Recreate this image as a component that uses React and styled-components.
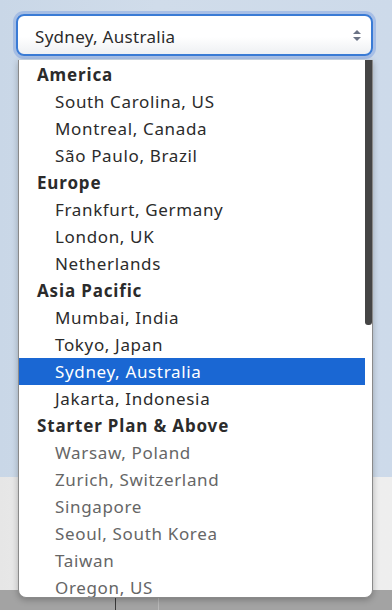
import React from "react";
import styled, { createGlobalStyle } from "styled-components";

const Global = createGlobalStyle`
  html, body { margin: 0; padding: 0; }
  body { font-family: "Noto Sans", "Open Sans", sans-serif; }
`;

const Page = styled.div`
  position: relative;
  width: 392px;
  height: 610px;
  overflow: hidden;
  display: grid;
  grid-template-rows: 477px 113px 1fr;
`;

const BlueZone = styled.div`
  background: linear-gradient(90deg, #c9d7e7 0%, #d0dcea 40%, #cddaea 100%);
  padding: 14px 19px 0 16px;
`;

const GrayZone = styled.div`
  background: linear-gradient(90deg, #e6e6e6 0%, #efefef 30%, #eeeeee 100%);
`;

const DarkZone = styled.div`
  background: #a3a3a3;
  display: flex;
`;

const DarkCell = styled.div`
  width: ${(p) => p.$w}px;
  border-right: 1px solid ${(p) => p.$line};
`;

const Select = styled.div`
  height: 42px;
  box-sizing: border-box;
  border: 2px solid #3a7bd5;
  border-radius: 8px;
  box-shadow: 0 0 0 3px rgba(70, 120, 220, 0.28);
  background: linear-gradient(180deg, #ffffff 0%, #ffffff 55%, #eef0f3 100%);
  display: flex;
  align-items: center;
  justify-content: space-between;
  padding: 3px 8px 0 17px;
  font-size: 17px;
  letter-spacing: 0.3px;
  color: #2b2b2b;
`;

const ArrowBox = styled.span`
  display: flex;
  margin-top: -3px;
`;

const Menu = styled.div`
  position: absolute;
  left: 18px;
  top: 60px;
  width: 355px;
  height: 538px;
  box-sizing: border-box;
  background: #fff;
  border: 1px solid #8a8a8a;
  border-top: none;
  border-radius: 0 0 8px 8px;
  box-shadow: 0 2px 6px rgba(0, 0, 0, 0.25);
  display: flex;
  overflow: hidden;
`;

const List = styled.ul`
  list-style: none;
  margin: 0;
  padding: 1px 0 0;
  flex: 1;
`;

const Group = styled.li`
  height: 27px;
  line-height: 27px;
  padding-left: 18px;
  font-size: 17px;
  font-weight: 700;
  letter-spacing: 0.85px;
  color: #2b2b2b;
  white-space: nowrap;
`;

const Option = styled.li`
  height: 27px;
  line-height: 27px;
  padding-left: 36px;
  font-size: 17px;
  letter-spacing: 0.65px;
  white-space: nowrap;
  color: ${(p) => (p.$selected ? "#ffffff" : p.$disabled ? "#666666" : "#2b2b2b")};
  background: ${(p) => (p.$selected ? "#1a67d3" : "transparent")};
`;

const Track = styled.div`
  width: 7px;
  display: flex;
  flex-direction: column;
`;

const Thumb = styled.div`
  height: 265px;
  background: #454545;
  border-radius: 0 0 3px 3px;
`;

const Arrows = () => (
  <svg width="12" height="16" viewBox="0 0 12 16">
    <path d="M2 7 L6 3 L10 7 Z" fill="#6b7385" />
    <path d="M2 10 L6 14 L10 10 Z" fill="#6b7385" />
  </svg>
);

const groups = [
  { label: "America", items: ["South Carolina, US", "Montreal, Canada", "São Paulo, Brazil"] },
  { label: "Europe", items: ["Frankfurt, Germany", "London, UK", "Netherlands"] },
  { label: "Asia Pacific", items: ["Mumbai, India", "Tokyo, Japan", "Sydney, Australia", "Jakarta, Indonesia"] },
  {
    label: "Starter Plan & Above",
    disabled: true,
    items: ["Warsaw, Poland", "Zurich, Switzerland", "Singapore", "Seoul, South Korea", "Taiwan", "Oregon, US"],
  },
];

export default function App() {
  const selected = "Sydney, Australia";
  return (
    <Page>
      <Global />
      <BlueZone>
        <Select>
          <span>{selected}</span>
          <ArrowBox>
            <Arrows />
          </ArrowBox>
        </Select>
      </BlueZone>
      <GrayZone />
      <DarkZone>
        <DarkCell $w={115} $line="#3a3a3a" />
        <DarkCell $w={42} $line="#b8b8b8" />
      </DarkZone>
      <Menu>
        <List>
          {groups.map((g) => (
            <React.Fragment key={g.label}>
              <Group>{g.label}</Group>
              {g.items.map((it) => (
                <Option key={it} $selected={it === selected} $disabled={g.disabled}>
                  {it}
                </Option>
              ))}
            </React.Fragment>
          ))}
        </List>
        <Track>
          <Thumb />
        </Track>
      </Menu>
    </Page>
  );
}
